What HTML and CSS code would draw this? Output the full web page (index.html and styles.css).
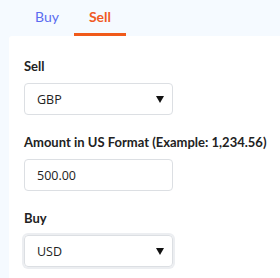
FILE: index.html
```html
<!DOCTYPE html>
<html>
<head>
<meta charset="utf-8">
<link rel="stylesheet" href="styles.css">
</head>
<body>
<div class="page">
  <div class="tabs">
    <div class="tab tab-buy">Buy</div>
    <div class="tab tab-sell active">Sell</div>
  </div>
  <div class="card">
    <div class="field">
      <label class="label">Sell</label>
      <div class="select"><span>GBP</span><span class="caret"></span></div>
    </div>
    <div class="field">
      <label class="label">Amount in US Format (Example: 1,234.56)</label>
      <div class="input">500.00</div>
    </div>
    <div class="field">
      <label class="label">Buy</label>
      <div class="select focus"><span>USD</span><span class="caret"></span></div>
    </div>
  </div>
</div>
</body>
</html>
```
FILE: styles.css
```css
html, body { margin: 0; padding: 0; }
body { background: #f5faff; font-family: "Open Sans", "Noto Sans", sans-serif; color: #222; }
.page { width: 280px; height: 278px; overflow: hidden; }
.tabs { display: flex; height: 36px; padding-left: 20px; }
.tab { padding: 0 15px; font-family: "Lato", sans-serif; font-size: 14px; line-height: 33px; border-bottom: 3px solid transparent; height: 33px; }
.tab-buy { color: #5a6cf0; }
.tab-sell { color: #f05a24; font-weight: 700; }
.tab.active { border-bottom-color: #f05a1a; }
.card { background: #fff; margin-left: 9px; padding: 21px 15px 0; height: 260px; border-top-left-radius: 3px; }
.field { margin-bottom: 18px; }
.label { display: block; font-family: "Lato", sans-serif; font-size: 13px; font-weight: 700; color: #222; line-height: 18px; margin-bottom: 8px; white-space: nowrap; }
.select, .input { box-sizing: border-box; width: 149px; height: 32px; border: 1px solid #dcdfe3; border-radius: 4px; display: flex; align-items: center; justify-content: space-between; padding: 0 8px 0 12px; font-size: 12.5px; color: #222; }
.select.focus { box-shadow: 0 0 0 2px #eceef1; }
.caret { width: 0; height: 0; border-left: 4.5px solid transparent; border-right: 4.5px solid transparent; border-top: 7px solid #111; }
```
